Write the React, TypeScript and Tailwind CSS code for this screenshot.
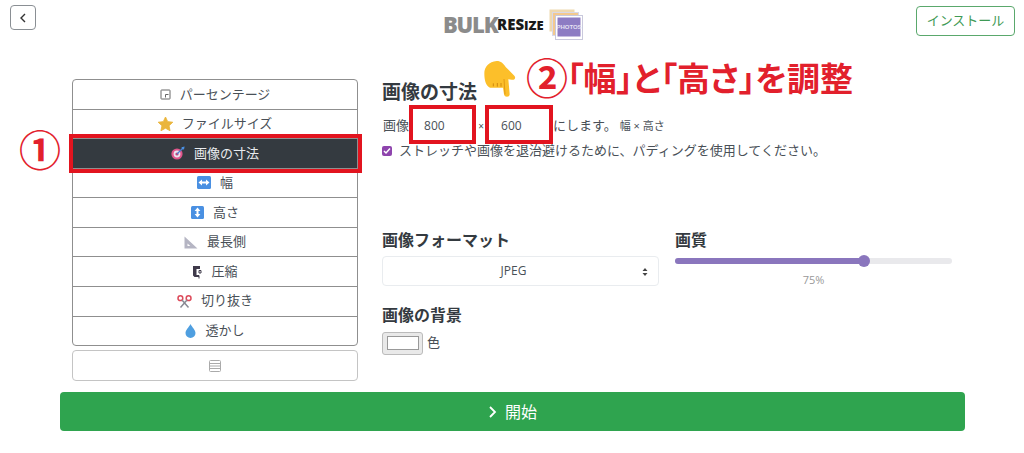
import React from "react";

const font = { fontFamily: '"Open Sans","Noto Sans CJK JP",sans-serif' };

const Crop = () => (
  <svg width="11" height="11" viewBox="0 0 11 11" fill="none" stroke="#666" strokeWidth="1">
    <rect x="1" y="1" width="9" height="9" rx="0.5" />
    <path d="M5.5 8.5V5.5H8.5" />
  </svg>
);
const Star = () => (
  <svg width="15" height="14" viewBox="0 0 24 23">
    <path d="M12 0l3.6 7.6 8.4 1-6.2 5.7 1.7 8.3-7.5-4.2-7.5 4.2 1.7-8.3L0 8.6l8.4-1z" fill="#eab53c" stroke="#eab53c" strokeWidth="1.500" strokeLinejoin="round" />
  </svg>
);
const Dart = () => (
  <svg width="14" height="14" viewBox="0 0 14 14">
    <circle cx="6" cy="8" r="5.6" fill="#e0568c" />
    <circle cx="6" cy="8" r="3.4" fill="#e8e4ee" />
    <circle cx="6" cy="8" r="1.6" fill="#c2447a" />
    <path d="M6 8l6-6" stroke="#4a7fd0" strokeWidth="1.2" />
    <path d="M10.5 1.2L13.6 0.6 13 3.6 11 3.2z" fill="#4a90e2" />
  </svg>
);
const H = () => (
  <svg width="14" height="13" viewBox="0 0 14 13">
    <rect width="14" height="13" rx="1.5" fill="#4a90e2" />
    <path d="M1.500 6.5L5 3.600V9.400zM12.500 6.500L9 3.600V9.400z" fill="#fff" />
    <rect x="4.500" y="5.500" width="5" height="2" fill="#fff" />
  </svg>
);
const V = () => (
  <svg width="13" height="13" viewBox="0 0 13 13">
    <rect width="13" height="13" rx="1.5" fill="#4a90e2" />
    <path d="M6.500 1.500L9.400 5H3.600zM6.500 11.500L9.400 8H3.600z" fill="#fff" />
    <rect x="5.500" y="4" width="2" height="5" fill="#fff" />
  </svg>
);
const Tri = () => (
  <svg width="14" height="13" viewBox="0 0 14 13">
    <path fillRule="evenodd" d="M0.5 0.5L13.5 12.5H0.5zM3.5 7.5V10H6.3z" fill="#b5b5c3" />
  </svg>
);
const Clamp = () => (
  <svg width="10" height="14" viewBox="0 0 10 14">
    <path d="M1 1H8V4H4.5V10H7V12H2.5L1 10.5z" fill="#3f3a4a" />
    <path d="M7 5.5H9V8H7zM7 10.5V13.5" stroke="#3f3a4a" strokeWidth="1" fill="none" />
  </svg>
);
const Scissors = () => (
  <svg width="15" height="13" viewBox="0 0 15 13" fill="none">
    <circle cx="3.4" cy="3.2" r="2.4" stroke="#dd4a5a" strokeWidth="1.5" />
    <circle cx="11.6" cy="3.2" r="2.4" stroke="#dd4a5a" strokeWidth="1.5" />
    <path d="M5 5L11.5 12.5M10 5L3.5 12.5" stroke="#8a8a94" strokeWidth="1.5" />
  </svg>
);
const Drop = () => (
  <svg width="11" height="14" viewBox="0 0 11 14">
    <path d="M5.5 0C4 3 0.5 6 0.5 9a5 5 0 0010 0C10.500 6 7 3 5.500 0z" fill="#4f9fe0" />
  </svg>
);
const ListIcon = () => (
  <svg width="12" height="12" viewBox="0 0 12 12" fill="none" stroke="#aaa" strokeWidth="1">
    <rect x="0.5" y="0.5" width="11" height="11" rx="1" />
    <path d="M1 3.5H11M1 6H11M1 8.500H11" />
  </svg>
);
const Hand = () => (
  <svg width="50" height="50" viewBox="0 0 150 150">
    <path d="M28 55C28 35 42 20 65 18C78 18 86 26 92 36L118 62C124 70 118 76 110 74L100 73L104 118C104 128 88 128 87 118L84 98L45 98C32 92 28 75 28 55Z" fill="#fcbf2a" />
    <path d="M55 85v9M67 84v11M78 84v11" stroke="#d08a10" strokeWidth="3" fill="none" />
    <path d="M87 72L90 118" stroke="#e39a14" strokeWidth="3" fill="none" />
  </svg>
);
const Logo = () => (
  <svg width="34" height="31" viewBox="0 0 34 31">
    <rect x="0.500" y="0.500" width="25" height="22" fill="#eed9b0" />
    <rect x="3.500" y="3.500" width="26" height="23" fill="#f3c98e" stroke="#d9d9e8" />
    <rect x="6.500" y="6.500" width="27" height="24" fill="#fff" stroke="#c9c9dc" />
    <rect x="8.500" y="8.500" width="23" height="19" fill="#8d7cc3" />
    <text x="20" y="20" fontSize="6" fontWeight="700" fill="#e4e0f3" textAnchor="middle" fontFamily="Liberation Sans">PHOTOS</text>
  </svg>
);

const rows: [React.ReactNode, string, boolean?][] = [
  [<Crop />, "パーセンテージ"],
  [<Star />, "ファイルサイズ"],
  [<Dart />, "画像の寸法", true],
  [<H />, "幅"],
  [<V />, "高さ"],
  [<Tri />, "最長側"],
  [<Clamp />, "圧縮"],
  [<Scissors />, "切り抜き"],
  [<Drop />, "透かし"],
];

export default function App() {
  return (
    <div className="relative h-[453px] w-[1024px] overflow-hidden bg-white text-[13px] text-[#495057]" style={font}>
      <header className="flex h-[79px] items-start pl-[10px] pr-[9px] pt-[5px]">
        <button className="flex h-[25px] w-[26px] items-center justify-center rounded border border-[#8a8f94] bg-white">
          <svg width="8" height="10" viewBox="0 0 8 10" fill="none" stroke="#333" strokeWidth="1.400"><path d="M6 1L2 5l4 4" /></svg>
        </button>
        <div className="ml-[407px] mt-[4px] flex h-[31px] items-center">
          <span className="w-[53px] text-[22px] font-extrabold leading-[31px] tracking-[-1.2px] text-[#8b8b8b]">BULK</span>
          <span className="ml-[1px] w-[49px] text-[15px] font-extrabold leading-[31px] text-[#1a1a1a]">RES<span className="text-[13px]">IZE</span></span>
          <span className="ml-[3px]"><Logo /></span>
        </div>
        <button className="ml-auto mt-px h-[30px] w-[99px] rounded border border-[#5aa86c] bg-white text-[13px] text-[#3f9a55]">インストール</button>
      </header>

      <main className="flex h-[301px] pl-[72px]">
        <aside className="w-[286px]">
          <nav className="flex h-[267px] flex-col overflow-hidden rounded border border-[#8f8f8f]">
            {rows.map(([icon, label, active], i) => (
              <div key={label} className={`flex flex-1 items-center justify-center gap-[9px] ${i ? "border-t border-[#8f8f8f]" : ""} ${active ? "bg-[#343a40] text-[#e9ecef]" : ""}`}>
                {icon}
                <span>{label}</span>
              </div>
            ))}
          </nav>
          <div className="mt-[4px] flex h-[31px] items-center justify-center rounded border border-[#c4c4c4]">
            <ListIcon />
          </div>
        </aside>

        <section className="ml-[24px] w-[570px]">
          <h2 className="mt-[1px] text-[19px] font-bold leading-[24px] text-[#343a40]">画像の寸法</h2>
          <div className="mt-[8px] flex h-[28px] items-center">
            <span className="ml-px">画像</span>
            <span className="ml-[2px] w-[64px] pl-[13px] text-[12px]">800</span>
            <span className="w-[12px] text-center text-[10px]">×</span>
            <span className="w-[66px] pl-[14px] text-[12px]">600</span>
            <span>にします。</span>
            <span className="ml-[3px] text-[11px]">幅 × 高さ</span>
          </div>
          <label className="mt-px flex h-[20px] items-center">
            <span className="flex h-[10px] w-[10px] items-center justify-center rounded-[2px] bg-[#8e44ad]">
              <svg width="8" height="8" viewBox="0 0 8 8" fill="none" stroke="#fff" strokeWidth="1.500"><path d="M1 4l2 2 4-4.500" /></svg>
            </span>
            <span className="ml-[7px]">ストレッチや画像を退治避けるために、パディングを使用してください。</span>
          </label>

          <div className="mt-[68px] flex gap-[16px]">
            <div className="w-[277px]">
              <h3 className="text-[16px] font-bold leading-[22px] text-[#343a40]">画像フォーマット</h3>
              <div className="relative mt-[5px] flex h-[30px] items-center justify-center rounded border border-[#e9ecef] pr-[14px] text-[12px]">
                JPEG
                <svg className="absolute right-[10px] top-[10px]" width="6" height="10" viewBox="0 0 6 10" fill="#444"><path d="M3 1l2.500 3H.5zM3 9L.5 6h5z" /></svg>
              </div>
            </div>
            <div className="w-[277px]">
              <h3 className="text-[16px] font-bold leading-[22px] text-[#343a40]">画質</h3>
              <div className="relative mt-[7px] h-[6px] rounded-full bg-[#e9e9ec]">
                <div className="h-[6px] w-[188px] rounded-full bg-[#8a76bd]" />
                <div className="absolute left-[183px] top-[-3px] h-[12px] w-[12px] rounded-full bg-[#8a76bd]" />
              </div>
              <div className="mt-[8px] text-center text-[11px] text-[#999]">75%</div>
            </div>
          </div>

          <h3 className="mt-[15px] text-[16px] font-bold leading-[22px] text-[#343a40]">画像の背景</h3>
          <div className="mt-[6px] flex items-center">
            <span className="flex h-[23px] w-[41px] items-center justify-center rounded-[3px] border border-[#bbb] bg-[#e9e9e9]">
              <span className="h-[14px] w-[32px] border border-[#999] bg-white" />
            </span>
            <span className="ml-[4px]">色</span>
          </div>
        </section>
      </main>

      <button className="mx-[60px] mt-[12px] flex h-[39px] w-[905px] items-center justify-center gap-[8px] rounded bg-[#2fa44f] text-[16px] text-white">
        <svg width="9" height="12" viewBox="0 0 9 12" fill="none" stroke="#fff" strokeWidth="1.800"><path d="M2 1l5 5-5 5" /></svg>
        開始
      </button>

      {/* Red annotations over the page */}
      <div className="absolute left-[69px] top-[134px] h-[39px] w-[293px] border-[4px] border-[#e2141f]" />
      <div className="absolute left-[409px] top-[105px] h-[39px] w-[67px] border-[4px] border-[#e2141f]" />
      <div className="absolute left-[485px] top-[105px] h-[39px] w-[68px] border-[4px] border-[#e2141f]" />
      <div className="absolute left-[19px] top-[127px] text-[42px] font-bold leading-[46px] text-[#e2202c]">①</div>
      <div className="absolute left-[475px] top-[55px]"><Hand /></div>
      <div className="absolute left-[526px] top-[55px] whitespace-nowrap text-[42px] font-bold leading-[46px] text-[#e2202c]">②</div>
      <div className="absolute left-[567px] top-[59px] whitespace-nowrap text-[33px] font-bold leading-[40px] text-[#e2202c]" style={{ fontFeatureSettings: '"palt"' }}>「幅」と「高さ」を調整</div>
    </div>
  );
}
